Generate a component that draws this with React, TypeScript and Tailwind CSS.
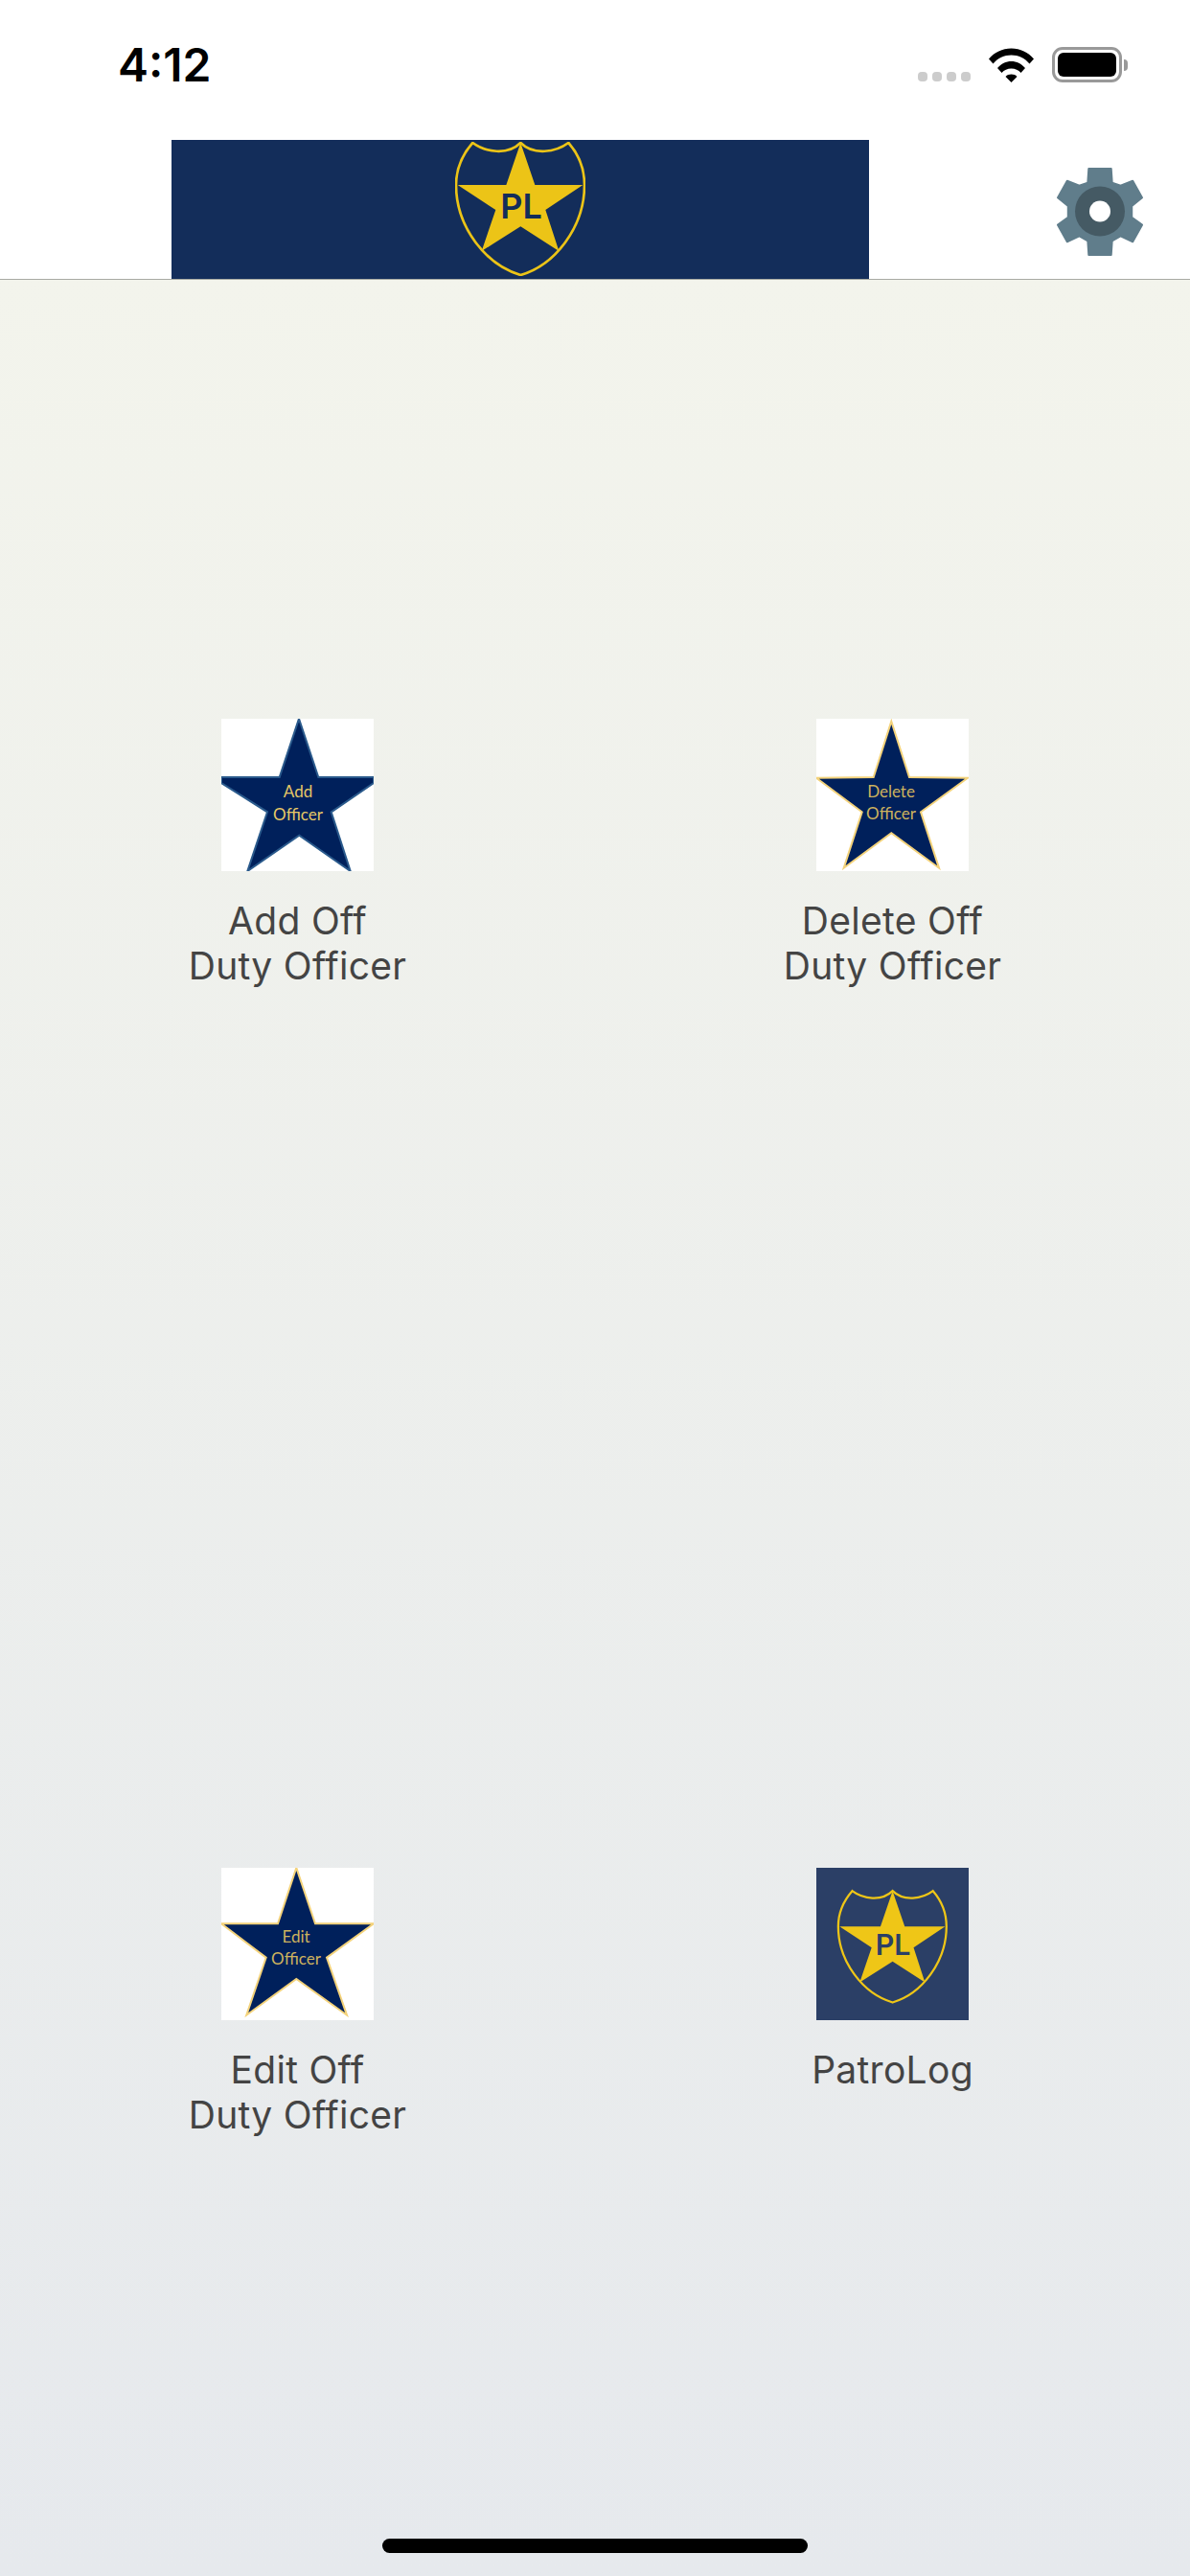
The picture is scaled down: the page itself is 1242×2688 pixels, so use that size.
const font = "font-['Inter','Liberation_Sans',sans-serif]";

function WifiIcon() {
  return (
    <svg width="47" height="36" viewBox="0 0 47 36" aria-hidden>
      <path d="M0 11.5C6 4.5 14 .5 23.5 .5S41 4.500 47 11.500l-4.500 5C37.500 10.500 31 7.500 23.500 7.500S9.500 10.500 4.500 16.500Z" fill="#000" />
      <path d="M9 21C13 16.500 18 14 23.500 14S34 16.500 38 21l-4.500 5C31 23 27.500 21.500 23.500 21.500S16 23 13.500 26Z" fill="#000" />
      <path d="M17.500 30C19 28.200 21 27.500 23.500 27.500S28 28.200 29.500 30L23.500 36Z" fill="#000" />
    </svg>
  );
}

function BatteryIcon() {
  return (
    <div className="flex items-center gap-[2px]">
      <div className="h-[37px] w-[73px] rounded-[11px] border-[3px] border-[#999999] p-[3px]">
        <div className="h-full w-full rounded-[6px] bg-black" />
      </div>
      <div className="h-[12px] w-[4px] rounded-r-[4px] bg-[#999999]" />
    </div>
  );
}

function StatusBar() {
  return (
    <div className="flex h-[146px] items-start justify-between pl-[123px] pr-[65px]">
      <span className={`${font} mt-[39px] text-[48px] leading-[57px] font-semibold text-black`}>4:12</span>
      <div className="mt-[49px] flex items-end">
        <div className="mb-[1px] flex gap-[5px]">
          <span className="h-[10px] w-[10px] rounded-[4px] bg-[#cccccc]" />
          <span className="h-[10px] w-[10px] rounded-[4px] bg-[#cccccc]" />
          <span className="h-[10px] w-[10px] rounded-[4px] bg-[#cccccc]" />
          <span className="h-[10px] w-[10px] rounded-[4px] bg-[#cccccc]" />
        </div>
        <div className="ml-[19px]">
          <WifiIcon />
        </div>
        <div className="ml-[19px]">
          <BatteryIcon />
        </div>
      </div>
    </div>
  );
}

// shield drawn in its own coordinates, 105..513 x 25..445
function ShieldLogo({ star = "#ecc417", ink = "#132d5a" }: { star?: string; ink?: string }) {
  return (
    <g>
      <path
        d="M160 28C200 58 270 68 310 28C350 68 420 58 460 28C495 68 510 112 510 160C510 290 420 410 310 442C200 410 108 290 108 160C108 112 125 68 160 28Z"
        fill="none"
        stroke={star}
        strokeWidth="8"
      />
      <path d="M310 28L355 160H505L388 238L430 367L310 290L188 367L232 238L113 160H265Z" fill={star} />
      <text
        x="312"
        y="265"
        textAnchor="middle"
        fontFamily="Inter, sans-serif"
        fontWeight="600"
        fontSize="108"
        fill={ink}
      >
        PL
      </text>
    </g>
  );
}

function Banner() {
  return (
    <div className="flex h-[145px] w-[728px] items-start justify-center bg-[#132d5a] pt-[2px]">
      <svg width="136" height="140" viewBox="105 25 408 420" aria-hidden>
        <ShieldLogo />
      </svg>
    </div>
  );
}

function GearIcon() {
  return (
    <svg width="90" height="94" viewBox="0 0 90 94" aria-hidden>
      <path
        d="M33 1H57L58 16L67 19L80 14L90 32L79 41V53L90 61L80 79L67 73L58 78L57 93H33L32 78L23 73L10 79L0 61L11 53V41L0 32L10 14L23 19L32 16Z"
        fill="#607d8b"
        stroke="#607d8b"
        strokeWidth="2"
        strokeLinejoin="round"
        transform="translate(1 1) scale(.978)"
      />
      <circle cx="45" cy="46.500" r="26" fill="#455a64" />
      <circle cx="45" cy="46.500" r="11" fill="#ffffff" />
    </svg>
  );
}

type StarTileProps = {
  points: string;
  stroke: string;
  ink: string;
  lines: [string, string];
  cx: number;
  baselines: [number, number];
};

function StarTile({ points, stroke, ink, lines, cx, baselines }: StarTileProps) {
  return (
    <svg width="159" height="159" viewBox="0 0 159 159" className="bg-white" aria-hidden>
      <polygon points={points} fill="#00205b" stroke={stroke} strokeWidth="2" />
      <text x={cx} y={baselines[0]} textAnchor="middle" fontFamily="Lato, sans-serif" fontSize="17" fill={ink}>
        {lines[0]}
      </text>
      <text x={cx} y={baselines[1]} textAnchor="middle" fontFamily="Lato, sans-serif" fontSize="17" fill={ink}>
        {lines[1]}
      </text>
    </svg>
  );
}

function LogoTile() {
  return (
    <svg width="159" height="159" viewBox="0 0 159 159" aria-hidden>
      <rect width="159" height="159" fill="#2b3f66" />
      <g transform="translate(22 23.300) scale(.281) translate(-105 -25)">
        <ShieldLogo star="#efc617" ink="#2b3f66" />
      </g>
    </svg>
  );
}

function MenuItem({ tile, label }: { tile: React.ReactNode; label: string[] }) {
  return (
    <div className="flex flex-col items-center justify-center">
      {tile}
      <div className={`${font} mt-[28px] h-[94px] text-center text-[39px] leading-[47px] tracking-[0.3px] text-[#444444]`}>
        {label.map((line) => (
          <p key={line}>{line}</p>
        ))}
      </div>
    </div>
  );
}

export default function App() {
  return (
    <div className="relative flex h-[2688px] w-[1242px] flex-col bg-white">
      <header className="border-b border-[#a8aaa3] bg-white">
        <StatusBar />
        <div className="relative flex h-[145px] pl-[179px]">
          <Banner />
          <div className="ml-[196px] mt-[28px]">
            <GearIcon />
          </div>
        </div>
      </header>
      <main className="grid flex-1 grid-cols-2 grid-rows-2 gap-y-[2px] bg-gradient-to-b from-[#f3f4ec] to-[#e6e9ed]">
        <MenuItem
          label={["Add Off", "Duty Officer"]}
          tile={
            <StarTile
              points="81,0 101.300,61 159,61 159,67 114.700,97.300 134.700,159 81.300,121.700 27.300,159 48,97.300 0,67 0,61 60.700,61"
              stroke="#2a5a8c"
              ink="#e6c766"
              lines={["Add", "Officer"]}
              cx={80}
              baselines={[81.700, 105.700]}
            />
          }
        />
        <MenuItem
          label={["Delete Off", "Duty Officer"]}
          tile={
            <StarTile
              points="78.300,2.700 97,61 158,61.700 109,97.300 128,155.700 78.300,119.300 28.700,155.700 47.700,97.300 0,61.700 59.700,61"
              stroke="#f3d27a"
              ink="#cdb25e"
              lines={["Delete", "Officer"]}
              cx={78}
              baselines={[81.700, 105]}
            />
          }
        />
        <MenuItem
          label={["Edit Off", "Duty Officer"]}
          tile={
            <StarTile
              points="78.300,0 98,58.300 159,58.300 110,93.700 131,153.700 78.300,116 26.300,153.700 46.700,93.700 0,58.300 59,58.300"
              stroke="#f3d27a"
              ink="#cdb25e"
              lines={["Edit", "Officer"]}
              cx={78}
              baselines={[78.300, 101]}
            />
          }
        />
        <MenuItem label={["PatroLog"]} tile={<LogoTile />} />
      </main>
      <div className="absolute bottom-[24px] left-[399px] h-[15px] w-[444px] rounded-[8px] bg-black" />
    </div>
  );
}
